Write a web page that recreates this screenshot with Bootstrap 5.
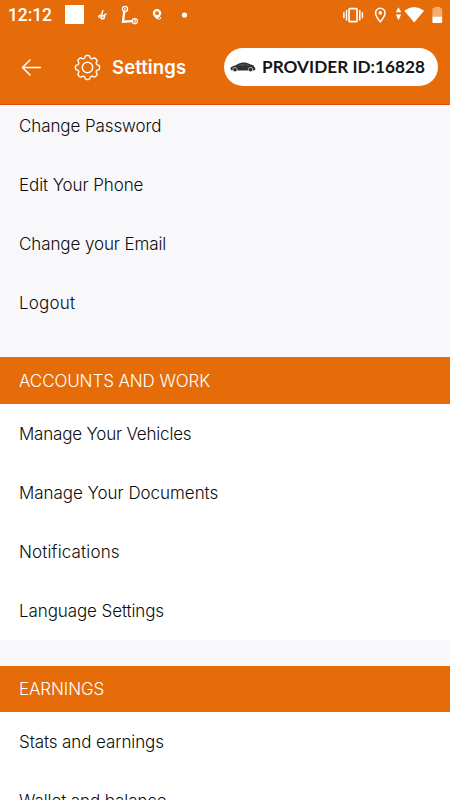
<!DOCTYPE html>
<html lang="en">
<head>
<meta charset="utf-8">
<meta name="viewport" content="width=device-width, initial-scale=1">
<title>Settings</title>
<link href="https://cdn.jsdelivr.net/npm/bootstrap@5.3.0/dist/css/bootstrap.min.css" rel="stylesheet">
<style>
html, body { height: 100%; }
body { background: #f8f8fb; overflow: hidden; font-family: Inter, "Open Sans", sans-serif; color: #0c0c0e; }
.screen { height: 800px; }
.brand-bg { background: #e56c09; color: #fff; }
.status-bar { height: 30px; padding: 0 7px 1px 8px; }
.clock { font: 500 17.5px/30px Roboto, sans-serif; width: 57px; letter-spacing: -.1px; }
.app-bar { height: 75px; padding: 0 12px 0 21px; border-bottom: 1px solid #df4d08; }
.app-bar-inner { height: 74px; }
.gear { margin-left: 32px; }
.app-title { font-size: 18.5px; font-weight: 600; letter-spacing: .1px; margin-left: 11px; line-height: 24px; }
.provider { height: 38px; width: 214px; padding: 0 0 0 6px; color: #151515; font: 700 17.2px/38px Lato, sans-serif; letter-spacing: .02px; }
.provider-id { margin-left: 6px; }
.menu-item { height: 59.2px; padding: 0 19px; font-size: 17px; font-weight: 300; line-height: 24px; letter-spacing: -.1px; }
.first-group { height: 252px; }
.first-group .menu-item:first-child { height: 50px; padding-bottom: 9px; }
.section-title { height: 46.5px; padding: 1px 19px 0; font-size: 17px; font-weight: 300; margin: 0; line-height: 24px; letter-spacing: -.1px; }
.white-group { background: #fff; height: 236.5px; padding-top: .6px; overflow: hidden; }
.section-gap { height: 25.5px; }
.menu-item.t-wide { letter-spacing: .2px; }
.menu-item.t-mid { letter-spacing: .15px; }
.menu-item.t-tight { letter-spacing: -.2px; }
.menu-item.t-none { letter-spacing: -.04px; }
svg { display: block; flex: none; }
</style>
</head>
<body>
<main class="screen d-flex flex-column overflow-hidden">
  <div class="status-bar brand-bg d-flex align-items-center flex-shrink-0">
    <span class="clock">12:12</span>
    <svg width="130" height="29" viewBox="65 0 130 29">
      <rect x="65" y="5" width="19" height="19" fill="#fff"/>
      <g fill="none" stroke="#fff" stroke-linecap="round">
        <path d="M102.700 10.800L101 18.200c.3 1.500 3.600.4 3.600-1.500 0-1.600-2.200-1.300-3 .2M100.800 15.200c-1.600.1-2.300 1.200-1.500 2M104.500 14.900l1.500-.8" stroke-width="1.500"/>
        <path d="M124.300 11.500L123 21.700l9-.6" stroke-width="2.300"/>
        <circle cx="125" cy="9" r="2.600" stroke-width="1.200"/>
        <circle cx="134.800" cy="21.200" r="2.600" stroke-width="1.100"/>
        <path d="M124 10l1-2.300 1 2.300M134.200 20v2.500h1.200v-2.500z" stroke-width=".7"/>
      </g>
      <path fill="#fff" fill-rule="evenodd" d="M157 9a4.200 4.200 0 0 0-4.200 4.200c0 2.400 2 3.600 4.200 6.200 2.200-2.600 4.200-3.800 4.200-6.200A4.200 4.200 0 0 0 157 9zm0 2.300a1.900 1.900 0 1 1 0 3.800 1.900 1.900 0 0 1 0-3.800z"/>
      <circle cx="159.300" cy="18" r="1.300" fill="#e56c09" stroke="#fff" stroke-width=".9"/>
      <circle cx="184.500" cy="15" r="2.600" fill="#fff"/>
    </svg>
    <svg class="ms-auto" width="102" height="29" viewBox="341 0 102 29">
      <g fill="none" stroke="#fff">
        <rect x="349" y="8.700" width="8" height="13" rx=".8" stroke-width="1.700"/>
        <path d="M346.500 10v10.500M359.800 10v10.500M343.900 12.300v6M362.400 12.300v6" stroke-width="1.500"/>
        <path d="M380.300 8.200a4.700 4.700 0 0 0-4.700 4.700c0 3.300 4.700 8.900 4.700 8.900s4.700-5.600 4.700-8.900a4.700 4.700 0 0 0-4.700-4.700z" stroke-width="1.500"/>
      </g>
      <circle cx="380.300" cy="12.900" r="1.800" fill="#fff"/>
      <path d="M398.500 7.200l2.700 5h-5.400zM398.500 20.300l2.700-5.800h-5.400z" fill="#fff"/>
      <path d="M404.300 10.700q9.900-7.400 19.800 0L414.200 22.500z" fill="#fff"/>
      <path d="M434.600 7v1.200h-2.200V16.500h9.800V8.200H440V7z" fill="#f3ad76"/>
      <path d="M432.400 16.500h9.800v5.500q0 1-1 1h-7.800q-1 0-1-1z" fill="#fff"/>
    </svg>
  </div>
  <header class="app-bar brand-bg flex-shrink-0">
    <div class="app-bar-inner d-flex align-items-center">
      <svg width="21" height="18" viewBox="0 0 21 18" fill="none" stroke="#fff" stroke-width="1.500" stroke-linecap="round" stroke-linejoin="round"><path d="M9 2L1.500 9.500 9 17M1.500 9.500H19.300"/></svg>
      <svg class="gear" width="27" height="27" viewBox="-13.500 -13.500 27 27" fill="none" stroke="#fff" stroke-width="1.400" stroke-linejoin="round">
        <circle r="5.200"/>
        <path id="teeth"/>
      </svg>
      <h1 class="app-title mb-0">Settings</h1>
      <div class="provider bg-white rounded-pill d-flex align-items-center ms-auto">
        <svg width="26" height="11" viewBox="0 0 26 11"><path d="M.5 5.600C2 4 5 3.800 7.500 2.200 10.500.3 15.500.2 18 1.200c2 .8 3.500 1.900 6 2.200l-.3 1.100c1.300.3 1.800 1.600 1.500 3.500l-1.700.5H3.200L.8 7.900z" fill="#303030"/><path d="M7.800 3.800c2.800-1.900 5.200-2.200 7-2l.3 2zM15.800 1.900c2 .1 3.300.8 4.300 1.600l-3.900.3z" fill="#505050"/><g fill="#303030" stroke="#fff" stroke-width=".6"><circle cx="5" cy="7.600" r="2.200"/><circle cx="20.500" cy="7.600" r="2.200"/></g></svg>
        <span class="provider-id">PROVIDER ID:16828</span>
      </div>
    </div>
  </header>
  <nav class="first-group flex-shrink-0">
    <div class="menu-item d-flex align-items-center">Change Password</div>
    <div class="menu-item d-flex align-items-center">Edit Your Phone</div>
    <div class="menu-item d-flex align-items-center">Change your Email</div>
    <div class="menu-item d-flex align-items-center t-wide">Logout</div>
  </nav>
  <h2 class="section-title brand-bg d-flex align-items-center flex-shrink-0">ACCOUNTS AND WORK</h2>
  <nav class="white-group flex-shrink-0">
    <div class="menu-item d-flex align-items-center t-tight">Manage Your Vehicles</div>
    <div class="menu-item d-flex align-items-center t-none">Manage Your Documents</div>
    <div class="menu-item d-flex align-items-center t-mid">Notifications</div>
    <div class="menu-item d-flex align-items-center">Language Settings</div>
  </nav>
  <div class="section-gap flex-shrink-0"></div>
  <h2 class="section-title brand-bg d-flex align-items-center flex-shrink-0">EARNINGS</h2>
  <nav class="white-group flex-shrink-0">
    <div class="menu-item d-flex align-items-center">Stats and earnings</div>
    <div class="menu-item d-flex align-items-center">Wallet and balance</div>
  </nav>
</main>
<script src="https://cdn.jsdelivr.net/npm/bootstrap@5.3.0/dist/js/bootstrap.bundle.min.js"></script>
<script>
/* Eight-tooth gear outline with softly rounded teeth */
const pts = [];
for (let a = 0; a <= 360; a += 3) {
  const t = a * Math.PI / 180;
  const r = 10.800 + 1.250 * Math.tanh(2.200 * (Math.cos(8 * t) + .25));
  pts.push((r * Math.cos(t)).toFixed(2) + ' ' + (r * Math.sin(t)).toFixed(2));
}
document.getElementById('teeth').setAttribute('d', 'M' + pts.join('L') + 'Z');
</script>
</body>
</html>
